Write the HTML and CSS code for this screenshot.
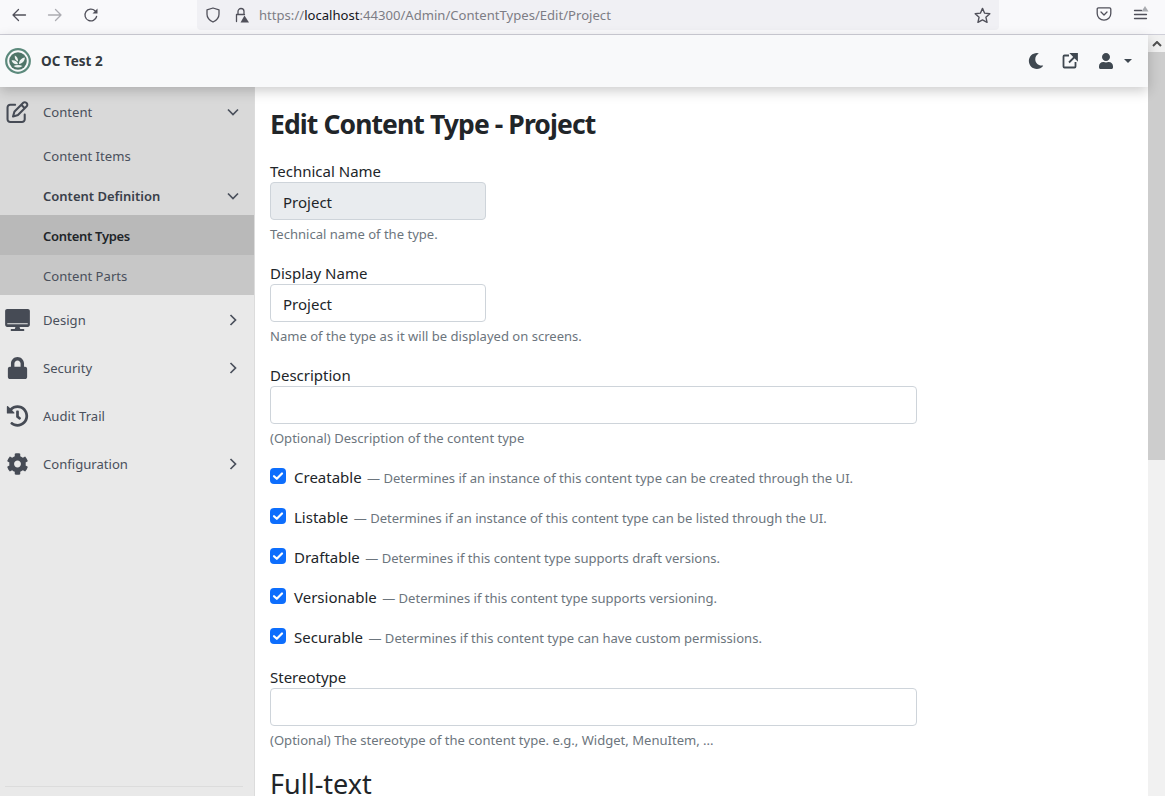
FILE: index.html
```html
<!DOCTYPE html>
<html lang="en">
<head>
<meta charset="utf-8">
<title>Edit Content Type - Project</title>
<link rel="stylesheet" href="styles.css">
</head>
<body>
<header class="browser">
  <div class="nav-btns">
    <svg class="bi" viewBox="0 0 16 16"><path d="M14.5 8H2M7.5 2.5 2 8l5.500 5.500" class="ln"/></svg>
    <svg class="bi dim" viewBox="0 0 16 16"><path d="M1.500 8H14M8.500 2.500 14 8l-5.500 5.500" class="ln"/></svg>
    <svg class="bi" viewBox="0 0 16 16"><path d="M13.600 9.500A5.900 5.900 0 1 1 12 3.800" class="ln"/><path d="M14.500 1.500v5h-5z" class="fl"/></svg>
  </div>
  <div class="urlbar">
    <svg class="bi shield" viewBox="0 0 16 16"><path d="M8 1 2 2.800v4.400c0 3.800 3 6.300 6 7.800 3-1.500 6-4 6-7.800V2.800z" class="ln"/></svg>
    <svg class="bi lock" viewBox="0 0 16 16"><path d="M3.500 14.500v-7h8M5 7V4.500a3 3 0 0 1 6 0V7" class="ln"/><path d="M11.500 8.500 16 15.500H7.500z" class="fl"/></svg>
    <span class="url"><span class="url-dim">https://</span><span class="url-host">localhost</span><span class="url-dim">:44300/Admin/ContentTypes/Edit/Project</span></span>
    <svg class="bi star" viewBox="0 0 16 16"><path d="m8 1.300 2 4.500 4.900.5-3.700 3.300 1.100 4.800L8 12.100l-4.300 2.300 1.100-4.800L1.100 6.300 6 5.800z" class="ln"/></svg>
  </div>
  <div class="tools">
    <svg class="bi" viewBox="0 0 16 16"><path d="M2.500 1.800h11c.8 0 1.300.5 1.300 1.300v4.400c0 3.700-3 6.700-6.800 6.700s-6.800-3-6.800-6.700V3.100c0-.8.500-1.300 1.300-1.300z" class="ln"/><path d="M5 6l3 3 3-3" class="ln"/></svg>
    <svg class="bi" viewBox="0 0 16 16"><path d="M1.500 4.500h7M1.500 8.500h12M1.500 12.500h12" class="ln"/><path d="M12 0l3.500 5.500h-7z" class="tri"/></svg>
  </div>
</header>
<div class="viewport">
  <div class="page">
    <nav class="topbar">
      <div class="brand">
        <svg class="logo" viewBox="0 0 26 26"><circle cx="13" cy="13" r="11.800" class="logo-ring"/><circle cx="13" cy="13" r="8.800" class="logo-disc"/><path d="M6.500 12.500c3-.6 5.500.6 6.500 3.500-3 .7-5.500-.7-6.500-3.500zM9.800 7.500c2.200 1 3.400 3.200 3.200 6-2.400-1-3.600-3.200-3.200-6zM19.800 9.500c.2 3.300-2.200 6-5.800 6.500 0-3.300 2.300-6 5.800-6.500zM8.500 18c3-1.200 6-1.200 9 0-3 2-6 2-9 0z" class="logo-leaf"/></svg>
        <span class="brand-name">OC Test 2</span>
      </div>
      <div class="top-actions">
        <svg class="ti" viewBox="0 0 512 512"><path d="M283.211 512c78.962 0 151.079-35.925 198.857-94.792 7.068-8.708-.639-21.430-11.562-19.350-124.203 23.654-238.262-71.576-238.262-196.954 0-72.222 38.662-138.635 101.498-174.394 9.686-5.512 7.250-20.197-3.756-22.230A258.156 258.156 0 0 0 283.211 0c-141.309 0-256 114.511-256 256 0 141.309 114.511 256 256 256z"/></svg>
        <svg class="ti ext" viewBox="0 0 16 16"><path d="M7 2.500H2.500a1 1 0 0 0-1 1v10a1 1 0 0 0 1 1h10a1 1 0 0 0 1-1V9" class="ext-ln"/><path d="M7 9.500 14 2.500M9.500 1h5.500v5.500z" class="ext-ln2"/></svg>
        <div class="user">
          <svg class="ti" viewBox="0 0 448 512"><path d="M224 256c70.700 0 128-57.300 128-128S294.700 0 224 0 96 57.300 96 128s57.300 128 128 128zm89.600 32h-16.700c-22.200 10.200-46.900 16-72.900 16s-50.600-5.800-72.900-16h-16.700C60.200 288 0 348.200 0 422.400V464c0 26.500 21.500 48 48 48h352c26.500 0 48-21.500 48-48v-41.600c0-74.200-60.200-134.400-134.400-134.400z"/></svg>
          <span class="caret"></span>
        </div>
      </div>
    </nav>
    <div class="body">
      <aside class="side">
        <ul class="menu">
          <li class="item">
            <svg class="mi" viewBox="0 0 512 512"><path d="M441 58.900L453.100 71c9.400 9.400 9.400 24.600 0 33.900L424 134.100 377.900 88 407 58.900c9.400-9.400 24.600-9.400 33.900 0zM209.800 256.200L344 121.900 390.100 168 255.800 302.100c-2.900 2.900-6.500 5-10.400 6.100l-58.500 16.700 16.700-58.500c1.100-3.900 3.200-7.500 6.100-10.400zM373.100 25L175.800 222.200c-8.700 8.700-15 19.400-18.300 31.100l-28.600 100c-2.400 8.400-.1 17.400 6.100 23.600s15.200 8.500 23.600 6.100l100-28.600c11.800-3.400 22.500-9.700 31.100-18.300L487 138.900c28.100-28.100 28.100-73.700 0-101.800L474.900 25C446.800-3.100 401.200-3.100 373.100 25zM88 64C39.400 64 0 103.400 0 152V424c0 48.600 39.400 88 88 88H360c48.600 0 88-39.400 88-88V312c0-13.300-10.700-24-24-24s-24 10.700-24 24V424c0 22.100-17.900 40-40 40H88c-22.100 0-40-17.900-40-40V152c0-22.100 17.900-40 40-40H200c13.300 0 24-10.700 24-24s-10.700-24-24-24H88z"/></svg>
            <span class="mt">Content</span>
            <svg class="chev" viewBox="0 0 12 12"><path d="M1 3.500 6 8.500l5-5"/></svg>
          </li>
          <li class="open-group">
            <div class="sub">Content Items</div>
            <div class="sub sub-parent">Content Definition<svg class="chev" viewBox="0 0 12 12"><path d="M1 3.500 6 8.500l5-5"/></svg></div>
            <div class="sub sub-active">Content Types</div>
            <div class="sub sub-nested">Content Parts</div>
          </li>
          <li class="item">
            <svg class="mi" viewBox="0 0 576 512"><path fill-rule="evenodd" d="M528 0H48C21.500 0 0 21.500 0 48v320c0 26.500 21.500 48 48 48h192l-16 48h-72c-13.300 0-24 10.700-24 24s10.700 24 24 24h272c13.300 0 24-10.700 24-24s-10.700-24-24-24h-72l-16-48h192c26.500 0 48-21.500 48-48V48c0-26.500-21.500-48-48-48zm-2 330H50v22h476z"/></svg>
            <span class="mt">Design</span>
            <svg class="chev" viewBox="0 0 12 12"><path d="M3.500 1 8.500 6l-5 5"/></svg>
          </li>
          <li class="item">
            <svg class="mi" viewBox="0 0 448 512"><path d="M400 224h-24v-72C376 68.200 307.800 0 224 0S72 68.200 72 152v72H48c-26.500 0-48 21.500-48 48v192c0 26.500 21.500 48 48 48h352c26.500 0 48-21.500 48-48V272c0-26.500-21.500-48-48-48zm-104 0H152v-72c0-39.700 32.300-72 72-72s72 32.300 72 72v72z"/></svg>
            <span class="mt">Security</span>
            <svg class="chev" viewBox="0 0 12 12"><path d="M3.500 1 8.500 6l-5 5"/></svg>
          </li>
          <li class="item">
            <svg class="mi" viewBox="0 0 512 512"><path d="M504 255.531c.253 136.640-111.180 248.372-247.820 248.468-59.015.042-113.223-20.530-155.822-54.911-11.077-8.940-11.905-25.541-1.839-35.607l11.267-11.267c8.609-8.609 22.353-9.551 31.891-1.984C173.062 425.135 212.781 440 256 440c101.705 0 184-82.311 184-184 0-101.705-82.311-184-184-184-48.814 0-93.149 18.969-126.068 49.932l50.754 50.754c10.080 10.080 2.941 27.314-11.313 27.314H24c-8.837 0-16-7.163-16-16V38.627c0-14.254 17.234-21.393 27.314-11.314l49.372 49.372C129.209 34.136 189.552 8 256 8c136.810 0 247.747 110.780 248 247.531zm-180.912 78.784l9.823-12.630c8.138-10.463 6.253-25.542-4.210-33.679L288 256.349V152c0-13.255-10.745-24-24-24h-16c-13.255 0-24 10.745-24 24v135.651l65.409 50.874c10.463 8.137 25.541 6.253 33.679-4.210z"/></svg>
            <span class="mt">Audit Trail</span>
          </li>
          <li class="item">
            <svg class="mi" viewBox="0 0 512 512"><path d="M487.400 315.700l-42.600-24.600c4.300-23.200 4.300-47 0-70.200l42.600-24.600c4.900-2.800 7.100-8.600 5.500-14-11.100-35.600-30-67.800-54.700-94.600-3.800-4.100-10-5.100-14.800-2.300L380.800 110c-17.900-15.400-38.500-27.300-60.800-35.100V25.800c0-5.600-3.900-10.500-9.400-11.700-36.700-8.200-74.300-7.800-109.200 0-5.500 1.200-9.400 6.100-9.400 11.700V75c-22.200 7.900-42.800 19.800-60.800 35.100L88.700 85.500c-4.900-2.800-11-1.900-14.800 2.300-24.700 26.700-43.600 58.900-54.700 94.600-1.700 5.400.6 11.200 5.500 14L67.300 221c-4.300 23.200-4.300 47 0 70.200l-42.600 24.600c-4.900 2.800-7.100 8.600-5.500 14 11.100 35.600 30 67.800 54.700 94.600 3.800 4.100 10 5.100 14.800 2.300l42.600-24.600c17.900 15.400 38.500 27.300 60.800 35.100v49.200c0 5.600 3.900 10.500 9.400 11.700 36.700 8.200 74.300 7.800 109.200 0 5.500-1.200 9.400-6.100 9.400-11.700v-49.200c22.200-7.900 42.800-19.800 60.800-35.100l42.600 24.600c4.900 2.800 11 1.900 14.800-2.300 24.700-26.700 43.600-58.900 54.700-94.600 1.500-5.500-.7-11.300-5.600-14.100zM256 336c-44.100 0-80-35.900-80-80s35.900-80 80-80 80 35.900 80 80-35.900 80-80 80z"/></svg>
            <span class="mt">Configuration</span>
            <svg class="chev" viewBox="0 0 12 12"><path d="M3.500 1 8.500 6l-5 5"/></svg>
          </li>
        </ul>
        <div class="side-rule"></div>
      </aside>
      <main class="main">
        <h1 class="title">Edit Content Type - Project</h1>
        <div class="field">
          <label class="lbl">Technical Name</label>
          <input class="input input-short input-ro" value="Project" readonly>
          <div class="hint">Technical name of the type.</div>
        </div>
        <div class="field">
          <label class="lbl">Display Name</label>
          <input class="input input-short" value="Project">
          <div class="hint">Name of the type as it will be displayed on screens.</div>
        </div>
        <div class="field">
          <label class="lbl">Description</label>
          <input class="input">
          <div class="hint">(Optional) Description of the content type</div>
        </div>
        <div class="check"><span class="box"><svg viewBox="0 0 16 16"><path d="M4 8.200l2.800 2.600L12 5.500"/></svg></span><span class="check-name">Creatable</span><span class="check-hint"> — Determines if an instance of this content type can be created through the UI.</span></div>
        <div class="check"><span class="box"><svg viewBox="0 0 16 16"><path d="M4 8.200l2.800 2.600L12 5.500"/></svg></span><span class="check-name">Listable</span><span class="check-hint"> — Determines if an instance of this content type can be listed through the UI.</span></div>
        <div class="check"><span class="box"><svg viewBox="0 0 16 16"><path d="M4 8.200l2.800 2.600L12 5.500"/></svg></span><span class="check-name">Draftable</span><span class="check-hint"> — Determines if this content type supports draft versions.</span></div>
        <div class="check"><span class="box"><svg viewBox="0 0 16 16"><path d="M4 8.200l2.800 2.600L12 5.500"/></svg></span><span class="check-name">Versionable</span><span class="check-hint"> — Determines if this content type supports versioning.</span></div>
        <div class="check"><span class="box"><svg viewBox="0 0 16 16"><path d="M4 8.200l2.800 2.600L12 5.500"/></svg></span><span class="check-name">Securable</span><span class="check-hint"> — Determines if this content type can have custom permissions.</span></div>
        <div class="field">
          <label class="lbl">Stereotype</label>
          <input class="input">
          <div class="hint">(Optional) The stereotype of the content type. e.g., Widget, MenuItem, ...</div>
        </div>
        <h2 class="section">Full-text</h2>
      </main>
    </div>
  </div>
  <div class="scrollbar">
    <div class="sb-btn"><svg viewBox="0 0 10 6"><path d="M1 5l4-4 4 4"/></svg></div>
    <div class="sb-thumb"></div>
  </div>
</div>
</body>
</html>
```
FILE: styles.css
```css
* { box-sizing: border-box; }
html, body { margin: 0; height: 796px; overflow: hidden; }
body { font-family: "Noto Sans", "Open Sans", sans-serif; font-size: 16px; color: #212529; background: #fff; }

.browser { height: 35px; background: #f9f9fb; border-bottom: 1px solid #cfcfd8; display: flex; align-items: flex-start; }
.bi { width: 16px; height: 16px; flex: none; }
.ln { fill: none; stroke: #50505a; stroke-width: 1.300; stroke-linejoin: round; stroke-linecap: round; }
.fl { fill: #50505a; }
.tri { fill: #a9abb0; }
.dim { opacity: .45; }
.nav-btns { display: flex; gap: 20px; padding: 7px 0 0 11px; width: 197px; }
.urlbar { width: 802px; height: 30px; background: #f0f0f4; border-radius: 0 0 4px 4px; display: flex; align-items: center; padding: 0 8px; }
.lock { margin-left: 12px; }
.url { margin-left: 10px; font-size: 13.100px; flex: 1; white-space: nowrap; }
.url-dim { color: #7d7d85; }
.url-host { color: #15141a; }
.star { width: 17px; height: 17px; }
.tools { display: flex; gap: 21px; padding: 6px 0 0 97px; }

.viewport { display: flex; height: 761px; }
.page { width: 1148px; flex: none; display: flex; flex-direction: column; }
.topbar { height: 52px; flex: none; background: #f8f9fa; display: flex; align-items: center; justify-content: space-between; padding: 0 16px 0 5px; box-shadow: 0 4px 12px rgba(0,0,0,.2); position: relative; z-index: 2; }
.brand { display: flex; align-items: center; gap: 10px; }
.logo { width: 26px; height: 26px; }
.logo-ring { fill: #f8f9fa; stroke: #5c8a7c; stroke-width: 2.200; }
.logo-disc { fill: #4f7568; }
.logo-leaf { fill: #eef3f1; }
.brand-name { font-size: 13.500px; font-weight: 700; color: #343a40; }
.top-actions { display: flex; align-items: center; gap: 18px; }
.ti { width: 16px; height: 16px; fill: #3f4850; display: block; }
.ext-ln { fill: none; stroke: #3f4850; stroke-width: 1.800; }
.ext-ln2 { fill: #3f4850; stroke: #3f4850; stroke-width: 1.800; }
.user { display: flex; align-items: center; gap: 10px; margin-left: 2px; }
.caret { width: 0; height: 0; border: 4px solid transparent; border-top-color: #3f4850; border-bottom: 0; }

.body { flex: 1; display: flex; min-height: 0; }
.side { width: 255px; flex: none; background: #e9e9e9; border-right: 1px solid #dcdcdc; display: flex; flex-direction: column; justify-content: space-between; padding-bottom: 9px; }
.menu { list-style: none; margin: 0; padding: 0; }
.item { height: 48px; display: flex; align-items: center; padding: 2px 15px 0 5px; color: #4a505c; }
.mi { width: 25px; height: 22px; fill: #464b55; flex: none; }
.mt { flex: 1; margin-left: 13px; font-size: 13.100px; }
.chev { width: 12px; height: 12px; flex: none; fill: none; stroke: #4a505c; stroke-width: 1.700; }
.item:first-child { background: #d9d9d9; }
.open-group { background: #d9d9d9; }
.sub { height: 40px; display: flex; align-items: center; justify-content: space-between; padding: 2px 15px 0 43px; font-size: 13.100px; color: #4a505c; }
.sub-parent { font-weight: 600; font-size: 13px; color: #3a404a; }
.sub-active { background: #b9b9b9; font-weight: 600; font-size: 13px; letter-spacing: -.3px; color: #212529; }
.sub-nested { background: #c7c7c7; }
.side-rule { height: 1px; margin: 0 11px 0 5px; background: #dcdcdc; }

.main { flex: 1; padding: 0 0 0 15px; min-width: 0; overflow: hidden; }
.title { margin: 19px 0 17px; font-size: 26.500px; line-height: 36px; font-weight: 700; letter-spacing: -.9px; }
.field { margin-bottom: 16px; }
.lbl { display: block; height: 23px; line-height: 24px; font-size: 15px; }
.input { display: block; width: 647px; height: 38px; border: 1px solid #ced4da; border-radius: 4px; background: #fff; padding: 2px 12px 0; font: inherit; font-size: 15px; color: #212529; }
.input-short { width: 216px; }
.input-ro { background: #e9ecef; }
.hint { margin-top: 4px; line-height: 21px; font-size: 13.050px; color: #6c757d; }
.check { height: 40px; display: flex; align-items: flex-start; padding-top: 3px; font-size: 15px; line-height: 18px; white-space: pre; }
.box { width: 16px; height: 16px; margin-right: 8px; background: #0d6efd; border-radius: 4px; flex: none; }
.box svg { display: block; width: 16px; height: 16px; fill: none; stroke: #fff; stroke-width: 2.200; stroke-linecap: round; stroke-linejoin: round; }
.check-hint { font-size: 13.050px; color: #6c757d; padding: 1px 0 0 2px; }
.section { margin: 1px 0 0; font-size: 27px; font-weight: 400; line-height: 34px; }

.scrollbar { width: 17px; flex: none; background: #f1f1f1; }
.sb-btn { height: 17px; display: flex; align-items: center; justify-content: center; }
.sb-btn svg { width: 10px; height: 6px; fill: none; stroke: #505050; stroke-width: 2; }
.sb-thumb { height: 408px; background: #cdcdcd; }
```
